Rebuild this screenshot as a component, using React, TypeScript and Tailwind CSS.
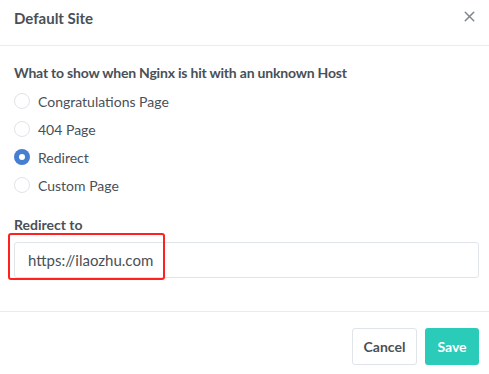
import { X } from "lucide-react";

const options = [
  { label: "Congratulations Page", checked: false },
  { label: "404 Page", checked: false },
  { label: "Redirect", checked: true },
  { label: "Custom Page", checked: false },
];

function Radio({ checked }: { checked: boolean }) {
  if (checked) {
    return (
      <span className="flex h-4 w-4 items-center justify-center rounded-full bg-[#467fcf]">
        <span className="h-[6px] w-[6px] rounded-full bg-white" />
      </span>
    );
  }
  return <span className="h-4 w-4 rounded-full border border-[#dfe3ea] bg-white" />;
}

export default function App() {
  return (
    <div className="flex h-[374px] w-[489px] flex-col bg-white font-['Lato',sans-serif] text-[#495057]">
      <header className="flex h-[46px] shrink-0 items-start justify-between border-b border-[#e9ecef] pl-[14px] pr-[11px] pt-[8px]">
        <h1 className="text-[15px] font-bold leading-[20px]">Default Site</h1>
        <X className="mt-[0px] h-[17px] w-[17px] text-[#7d848c]" strokeWidth={2} />
      </header>

      <div className="flex-1 pl-[14px] pr-[10px] pt-[17px]">
        <p className="text-[14px] font-bold leading-[20px] tracking-[-0.2px]">What to show when Nginx is hit with an unknown Host</p>
        <div className="mt-[4px] flex flex-col">
          {options.map((o) => (
            <label key={o.label} className="flex h-[28px] items-center gap-2 text-[14px]">
              <Radio checked={o.checked} />
              <span>{o.label}</span>
            </label>
          ))}
        </div>

        <p className="mt-[16px] text-[14px] font-bold leading-[20px]">Redirect to</p>
        <div className="relative mt-[7px]">
          <div className="flex h-[36px] items-center rounded-[3px] border border-[#e0e5ec] px-[13px] text-[15px]">
            https://ilaozhu.com
          </div>
          <div className="pointer-events-none absolute left-[-6px] top-[-9px] h-[47px] w-[157px] rounded-[3px] border-2 border-[#ff2020]" />
        </div>
      </div>

      <footer className="flex h-[63px] shrink-0 items-start justify-end gap-2 border-t border-[#e9ecef] pr-[10px] pt-[16px]">
        <button className="h-[37px] w-[65px] rounded-[3px] border border-[#dfe3ea] bg-white text-[14px] font-bold text-[#495057]">
          Cancel
        </button>
        <button className="h-[37px] w-[54px] rounded-[3px] bg-[#2bcbba] text-[14px] font-bold text-white">
          Save
        </button>
      </footer>
    </div>
  );
}
